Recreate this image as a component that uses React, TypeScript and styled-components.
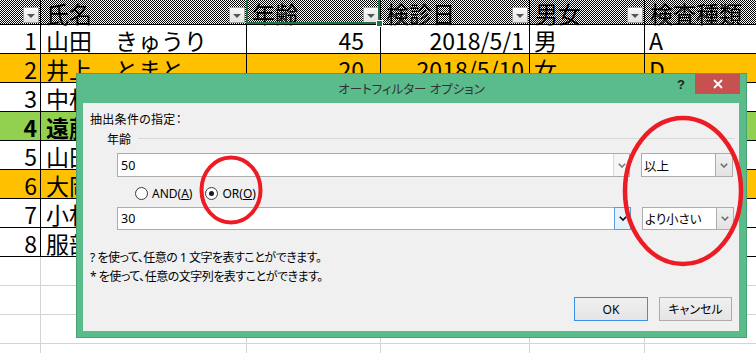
import React from 'react';
import styled, { createGlobalStyle, css } from 'styled-components';

const ORANGE = '#ffc000';
const GREEN = '#92d050';
const WHITE = '#ffffff';
const SHEET_FONT = '"Noto Sans CJK JP", "Noto Sans", sans-serif';
const UI_FONT = '"Noto Sans", "Noto Sans CJK JP", sans-serif';

const GlobalStyle = createGlobalStyle`
  html, body {
    margin: 0;
    padding: 0;
    background: #fff;
  }
  body {
    width: 756px;
    height: 353px;
    overflow: hidden;
  }
`;

const Screen = styled.div`
  position: relative;
  width: 756px;
  height: 353px;
  overflow: hidden;
`;

/* ---------- spreadsheet ---------- */

const Sheet = styled.div`
  display: grid;
  grid-template-columns: 41px 206px 134px 149px 115px 140px;
  grid-template-rows: 25px;
  grid-auto-rows: 29px;
  font-family: ${SHEET_FONT};
  font-size: 23px;
  color: #000;
`;

const HeadCell = styled.div<{ $active?: boolean }>`
  position: relative;
  z-index: ${(p) => (p.$active ? 1 : 0)};
  box-sizing: border-box;
  display: flex;
  justify-content: space-between;
  padding-left: 5px;
  background: repeating-conic-gradient(#000 0 25%, #fff 0 50%) 0 0 / 2px 2px;
  border-right: 1px solid #000;
  border-bottom: 1px solid #000;

  ${(p) =>
    p.$active &&
    css`
      &::after {
        content: '';
        position: absolute;
        left: -1px;
        top: -2px;
        right: 0;
        bottom: 0;
        border: 2px solid #217346;
        pointer-events: none;
      }
      &::before {
        content: '';
        position: absolute;
        right: -3px;
        bottom: -3px;
        width: 5px;
        height: 5px;
        background: #217346;
        border: 1px solid #fff;
        z-index: 2;
      }
    `}
`;

const HeadLabel = styled.span`
  line-height: 24px;
  margin-top: 1px;
  white-space: nowrap;
`;

const FilterButton = styled.span`
  flex: none;
  box-sizing: border-box;
  width: 16px;
  height: 16px;
  align-self: flex-end;
  margin: 0 1px 1px 0;
  display: flex;
  align-items: center;
  justify-content: center;
  background: linear-gradient(#f7f7f7, #e3e3e3);
  border: 1px solid #a3a3a3;

  &::after {
    content: '';
    margin-top: 1px;
    border-left: 4px solid transparent;
    border-right: 4px solid transparent;
    border-top: 4px solid #555;
  }
`;

const Cell = styled.div<{ $bg: string; $right?: boolean; $pad: number; $empty?: boolean; $bold?: boolean }>`
  box-sizing: border-box;
  display: flex;
  align-items: center;
  justify-content: ${(p) => (p.$right ? 'flex-end' : 'flex-start')};
  padding: 2px ${(p) => (p.$right ? p.$pad : 0)}px 0 ${(p) => (p.$right ? 0 : p.$pad)}px;
  background: ${(p) => p.$bg};
  border-right: 1px solid ${(p) => (p.$empty ? '#d4d4d4' : '#000')};
  border-bottom: 1px solid ${(p) => (p.$empty ? '#d4d4d4' : '#000')};
  font-weight: ${(p) => (p.$bold ? 700 : 400)};
  line-height: 1;
  white-space: pre;
  overflow: hidden;
`;

type Row = { no: string; name: string; age: string; date: string; sex: string; kind: string; bg: string; bold?: boolean };

const columns: { key: keyof Row; label: string; right?: boolean; pad: number; active?: boolean }[] = [
  { key: 'no', label: '', right: true, pad: 3 },
  { key: 'name', label: '氏名', pad: 5 },
  { key: 'age', label: '年齢', right: true, pad: 16, active: true },
  { key: 'date', label: '検診日', right: true, pad: 5 },
  { key: 'sex', label: '男女', pad: 4 },
  { key: 'kind', label: '検査種類', pad: 4 },
];

const rows: Row[] = [
  { no: '1', name: '山田　きゅうり', age: '45', date: '2018/5/1', sex: '男', kind: 'A', bg: WHITE },
  { no: '2', name: '井上　とまと', age: '20', date: '2018/5/10', sex: '女', kind: 'D', bg: ORANGE },
  { no: '3', name: '中村　なすび', age: '38', date: '2018/5/12', sex: '男', kind: 'B', bg: WHITE },
  { no: '4', name: '遠藤　ごぼう', age: '52', date: '2018/5/15', sex: '男', kind: 'C', bg: GREEN, bold: true },
  { no: '5', name: '山田　かぶ', age: '41', date: '2018/5/18', sex: '女', kind: 'A', bg: WHITE },
  { no: '6', name: '大岡　れんこん', age: '27', date: '2018/5/21', sex: '男', kind: 'D', bg: ORANGE },
  { no: '7', name: '小林　だいこん', age: '33', date: '2018/5/24', sex: '女', kind: 'B', bg: WHITE },
  { no: '8', name: '服部　にんじん', age: '60', date: '2018/5/28', sex: '男', kind: 'C', bg: WHITE },
];

/* ---------- dialog ---------- */

const Dialog = styled.div`
  position: absolute;
  left: 76px;
  top: 73px;
  z-index: 5;
  box-sizing: border-box;
  width: 671px;
  height: 265px;
  display: flex;
  flex-direction: column;
  background: #5abb8b;
  border: 1px solid #48a073;
  font-family: ${UI_FONT};
  font-size: 12px;
  font-feature-settings: 'palt';
  color: #000;
`;

const TitleBar = styled.div`
  flex: none;
  height: 29px;
  display: grid;
  grid-template-columns: 1fr auto 1fr;
  align-items: center;
`;

const Title = styled.div`
  font-size: 12.5px;
  color: #333;
  white-space: nowrap;
`;

const Controls = styled.div`
  justify-self: end;
  align-self: start;
  display: flex;
  align-items: center;
  gap: 10px;
  margin-right: 6px;
`;

const HelpMark = styled.span`
  font: bold 13px 'Liberation Sans', sans-serif;
  color: #222;
`;

const CloseButton = styled.div`
  width: 45px;
  height: 20px;
  display: flex;
  align-items: center;
  justify-content: center;
  background: #c75050;
`;

const Client = styled.div`
  flex: 1;
  margin: 0 7px 6px 6px;
  padding: 9px 0 0 7px;
  display: flex;
  flex-direction: column;
  background: #f0f0f0;
`;

const Line = styled.div<{ $top?: number; $tight?: boolean }>`
  margin-top: ${(p) => p.$top ?? 0}px;
  line-height: 16px;
  height: 16px;
  letter-spacing: ${(p) => (p.$tight ? '-0.5px' : '0.3px')};
  white-space: nowrap;
`;

const GroupHeader = styled.div`
  margin: 3px 4px 0 17px;
  height: 16px;
  display: flex;
  align-items: center;
  gap: 7px;

  &::after {
    content: '';
    flex: 1;
    height: 1px;
    margin-top: -1px;
    background: #d9d9d9;
  }
`;

const ComboRow = styled.div<{ $top: number }>`
  margin: ${(p) => p.$top}px 0 0 27px;
  display: flex;
  gap: 11px;
`;

const ComboBox = styled.div<{ $width: number; $height: number }>`
  box-sizing: border-box;
  width: ${(p) => p.$width}px;
  height: ${(p) => p.$height}px;
  display: flex;
  background: #fff;
  border: 1px solid #acacac;
`;

const ComboValue = styled.div<{ $op?: boolean }>`
  flex: 1;
  display: flex;
  align-items: center;
  padding-left: ${(p) => (p.$op ? 2 : 3)}px;
  font-size: 12.5px;
  white-space: nowrap;
`;

type DropState = 'plain' | 'focus' | 'button';

const DropButton = styled.div<{ $state: DropState }>`
  flex: none;
  box-sizing: border-box;
  width: ${(p) => (p.$state === 'button' ? 17 : 16)}px;
  display: flex;
  align-items: center;
  justify-content: center;
  ${(p) =>
    p.$state === 'focus'
      ? css`
          margin: -1px -1px -1px 0;
          width: 17px;
          background: #e5f1fb;
          border: 1px solid #5b9ee0;
          color: #000;
        `
      : p.$state === 'button'
        ? css`
            background: linear-gradient(#f0f0f0, #e3e3e3);
            border-left: 1px solid #acacac;
            color: #6d6d6d;
          `
        : css`
            background: #f6f6f6;
            border-left: 1px solid #dadada;
            color: #7a7a7a;
          `}
`;

const RadioRow = styled.div`
  margin: 8px 0 0 45px;
  height: 16px;
  display: flex;
  align-items: center;
  gap: 13px;
`;

const RadioItem = styled.label`
  display: flex;
  align-items: center;
  gap: 4px;
  white-space: nowrap;
`;

const RadioCircle = styled.span<{ $checked?: boolean }>`
  box-sizing: border-box;
  width: 13px;
  height: 13px;
  border-radius: 50%;
  border: 1px solid #3a3a3a;
  background: #fff;
  display: flex;
  align-items: center;
  justify-content: center;

  &::after {
    content: '';
    width: 5px;
    height: 5px;
    border-radius: 50%;
    background: ${(p) => (p.$checked ? '#1a1a1a' : 'transparent')};
  }
`;

const ButtonRow = styled.div`
  margin: 12px 7px 0 0;
  display: flex;
  justify-content: flex-end;
  gap: 11px;
`;

const DialogButton = styled.div<{ $default?: boolean }>`
  box-sizing: border-box;
  width: ${(p) => (p.$default ? 74 : 73)}px;
  height: 24px;
  display: flex;
  align-items: center;
  justify-content: center;
  background: linear-gradient(#f0f0f0, #e5e5e5);
  border: 1px solid ${(p) => (p.$default ? '#3c8fe6' : '#acacac')};
`;

const Annotations = styled.svg`
  position: absolute;
  left: 0;
  top: 0;
  z-index: 10;
  pointer-events: none;
`;

const Chevron = () => (
  <svg width="8" height="5" viewBox="0 0 8 5">
    <path d="M0.8 0.8 L4 4 L7.2 0.8" fill="none" stroke="currentColor" strokeWidth="1.6" />
  </svg>
);

const Combo = ({ width, height, value, state, op }: { width: number; height: number; value: string; state: DropState; op?: boolean }) => (
  <ComboBox $width={width} $height={height}>
    <ComboValue $op={op}>{value}</ComboValue>
    <DropButton $state={state}>
      <Chevron />
    </DropButton>
  </ComboBox>
);

export default function App() {
  const empty = Array.from({ length: 4 });
  return (
    <Screen>
      <GlobalStyle />
      <Sheet>
        {columns.map((c) => (
          <HeadCell key={c.key} $active={c.active}>
            <HeadLabel>{c.label}</HeadLabel>
            <FilterButton />
          </HeadCell>
        ))}
        {rows.map((r) =>
          columns.map((c) => (
            <Cell key={r.no + c.key} $bg={r.bg} $right={c.right} $pad={c.pad} $bold={r.bold}>
              {r[c.key] as string}
            </Cell>
          ))
        )}
        {empty.map((_, i) =>
          columns.map((c) => <Cell key={'e' + i + c.key} $bg={WHITE} $pad={c.pad} $empty />)
        )}
      </Sheet>

      <Dialog>
        <TitleBar>
          <span />
          <Title>オートフィルター オプション</Title>
          <Controls>
            <HelpMark>?</HelpMark>
            <CloseButton>
              <svg width="10" height="10" viewBox="0 0 10 10">
                <path d="M1 1 L9 9 M9 1 L1 9" stroke="#fff" strokeWidth="1.8" />
              </svg>
            </CloseButton>
          </Controls>
        </TitleBar>
        <Client>
          <Line>抽出条件の指定：</Line>
          <GroupHeader>年齢</GroupHeader>
          <ComboRow $top={6}>
            <Combo width={513} height={24} value="50" state="plain" />
            <Combo width={92} height={24} value="以上" state="button" op />
          </ComboRow>
          <RadioRow>
            <RadioItem>
              <RadioCircle />
              <span>
                AND(<u>A</u>)
              </span>
            </RadioItem>
            <RadioItem>
              <RadioCircle $checked />
              <span>
                OR(<u>O</u>)
              </span>
            </RadioItem>
          </RadioRow>
          <ComboRow $top={6}>
            <Combo width={514} height={23} value="30" state="focus" />
            <Combo width={92} height={23} value="より小さい" state="button" op />
          </ComboRow>
          <Line $top={20} $tight>? を使って、任意の 1 文字を表すことができます。</Line>
          <Line $top={3} $tight>* を使って、任意の文字列を表すことができます。</Line>
          <ButtonRow>
            <DialogButton $default>OK</DialogButton>
            <DialogButton>キャンセル</DialogButton>
          </ButtonRow>
        </Client>
      </Dialog>

      <Annotations width="756" height="353" viewBox="0 0 756 353">
        <ellipse cx="231" cy="190" rx="29.5" ry="32.5" fill="none" stroke="#ed1c24" strokeWidth="4" />
        <ellipse cx="683" cy="191" rx="58" ry="73" fill="none" stroke="#ed1c24" strokeWidth="4.5" />
      </Annotations>
    </Screen>
  );
}
